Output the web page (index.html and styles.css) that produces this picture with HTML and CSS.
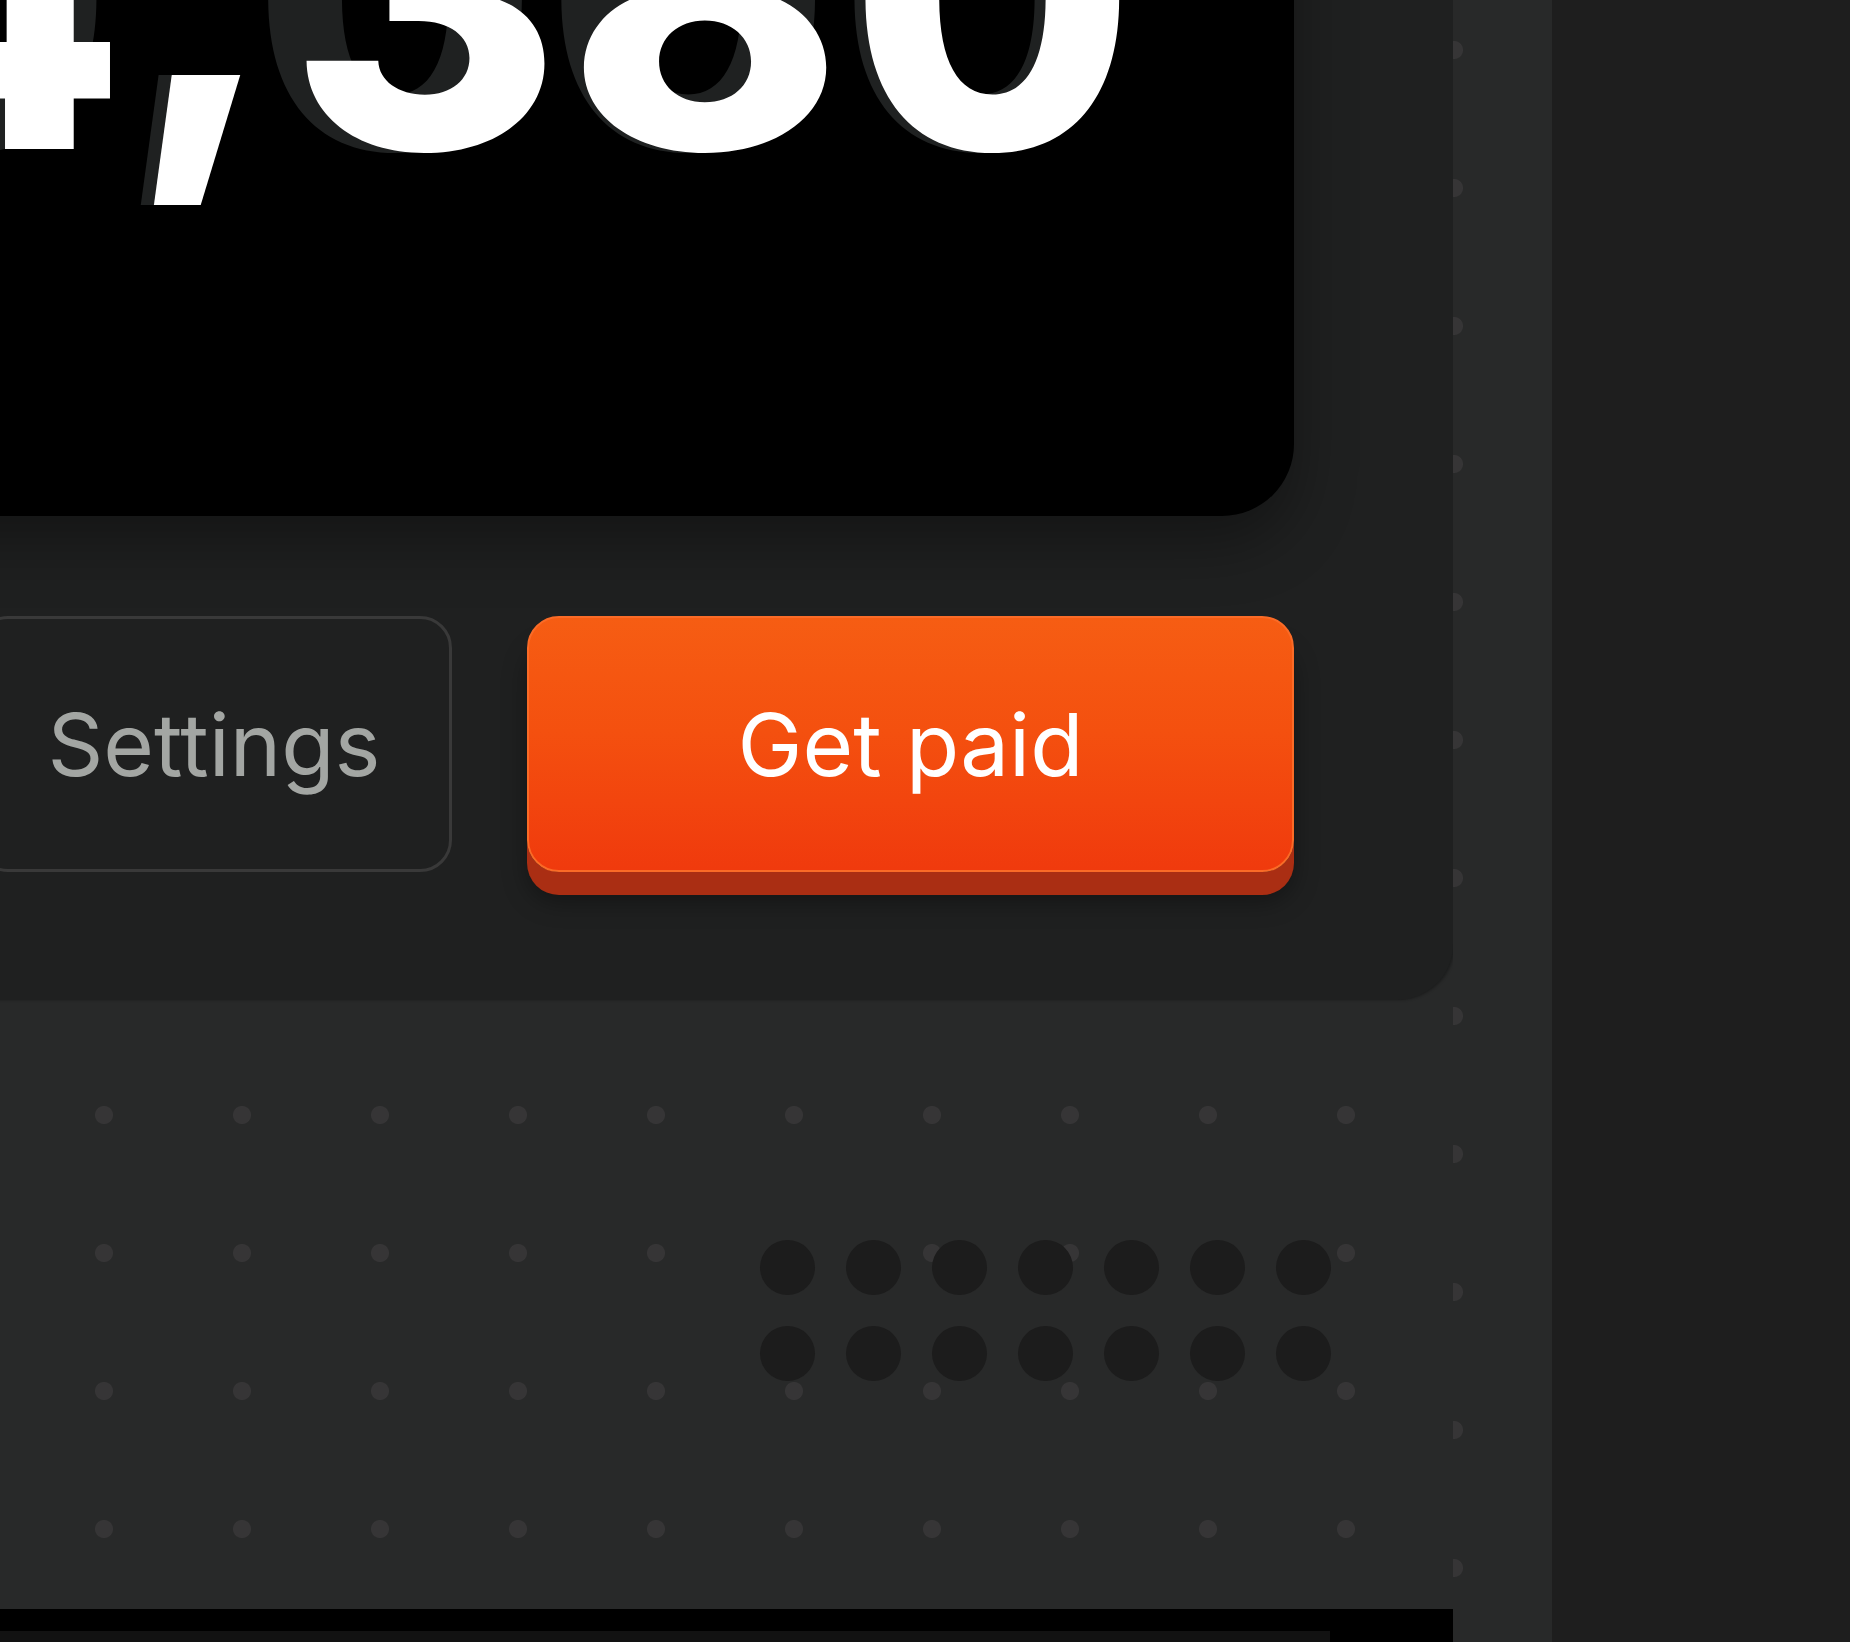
FILE: index.html
```html
<!DOCTYPE html>
<html lang="en">
<head>
    <meta charset="UTF-8">
    <meta name="viewport" content="width=device-width, initial-scale=1.0">
    <title>Balance</title>
    <link rel="stylesheet" href="styles.css">
</head>
<body>
    <div class="content">
        <div class="panel">
            <div class="balance-card">
                <div class="amount">
                    <span class="amount-ghost">$0<span class="sep">,</span>000</span>
                    <span class="amount-value">$4<span class="sep">,</span>380</span>
                </div>
            </div>
            <div class="actions">
                <button class="btn btn-outline">Settings</button>
                <button class="btn btn-primary">Get paid</button>
            </div>
        </div>

        <div class="speaker">
            <span></span><span></span><span></span><span></span><span></span><span></span><span></span>
            <span></span><span></span><span></span><span></span><span></span><span></span><span></span>
        </div>

        <div class="footer-card">
            <div class="footer-inner"></div>
        </div>
    </div>
    <div class="rail"></div>
    <div class="side"></div>
</body>
</html>
```

FILE: styles.css
```css
html, body {
    margin: 0;
    padding: 0;
}
body {
    display: flex;
    height: 1642px;
    overflow: hidden;
    background-color: #1d1d1d;
    font-family: Inter, "Noto Sans", sans-serif;
}
.content {
    width: 1453px;
    flex-shrink: 0;
    display: flex;
    flex-direction: column;
    background-color: #282929;
    background-image: radial-gradient(circle at 69px 69px, #363536 8.5px, transparent 9.5px);
    background-size: 138px 138px;
    background-position: 35px 80px;
}
.rail {
    width: 99px;
    flex-shrink: 0;
    background-color: #282929;
    background-image: radial-gradient(circle at 1px 50px, #363536 8.5px, transparent 9.5px);
    background-size: 99px 138px;
}
.side {
    flex: 1;
    background-color: #1e1e1e;
}

/* top panel */
.panel {
    margin: -300px 0 0 -400px;
    padding: 0 159px 128px 160px;
    background: #1f2020;
    border-radius: 0 0 56px 0;
    box-shadow: 2px 0 3px rgba(0, 0, 0, 0.3);
    display: flex;
    flex-direction: column;
}
.balance-card {
    height: 816px;
    background: #000;
    border-radius: 0 0 72px 0;
    box-shadow: 0 26px 60px rgba(0, 0, 0, 0.35);
    overflow: hidden;
    display: flex;
    justify-content: flex-end;
    padding-right: 152px;
}
.amount {
    position: relative;
    margin-top: 91px;
    font-size: 415px;
    font-weight: 800;
    line-height: 1;
    letter-spacing: 6px;
    white-space: nowrap;
}
.amount .sep {
    position: relative;
    top: -27px;
    margin: 0 6px 0 -2px;
}
.amount-ghost {
    position: absolute;
    top: 0;
    right: 11px;
    color: #1f2121;
}
.amount-ghost .sep {
    margin-right: -18px;
}
.amount-value {
    position: relative;
    color: #fff;
}

.actions {
    display: flex;
    justify-content: flex-end;
    gap: 75px;
    margin-top: 100px;
}
.btn {
    height: 256px;
    border-radius: 32px;
    font-family: Inter, "Noto Sans", sans-serif;
    font-size: 87px;
    font-weight: 400;
    padding: 0;
    cursor: pointer;
}
.btn-outline {
    width: 476px;
    background: transparent;
    border: 3px solid #393939;
    color: #a3a6a3;
}
.btn-primary {
    width: 767px;
    background: linear-gradient(180deg, #f65d13 0%, #f4500f 45%, #f03a0d 100%);
    border: 2px solid #fa6b27;
    color: #fff;
    box-shadow: 0 23px 0 #aa2e13, 0 30px 24px rgba(0, 0, 0, 0.35);
}

/* speaker grille */
.speaker {
    display: grid;
    grid-template-columns: repeat(7, 55px);
    grid-auto-rows: 55px;
    gap: 31px;
    margin: 240px 0 0 760px;
}
.speaker span {
    border-radius: 50%;
    background: #1c1c1c;
}

.footer-card {
    margin-top: 228px;
    height: 200px;
    background: #000;
    padding-top: 22px;
}
.footer-inner {
    width: 1330px;
    height: 100px;
    background: #121212;
}
```
